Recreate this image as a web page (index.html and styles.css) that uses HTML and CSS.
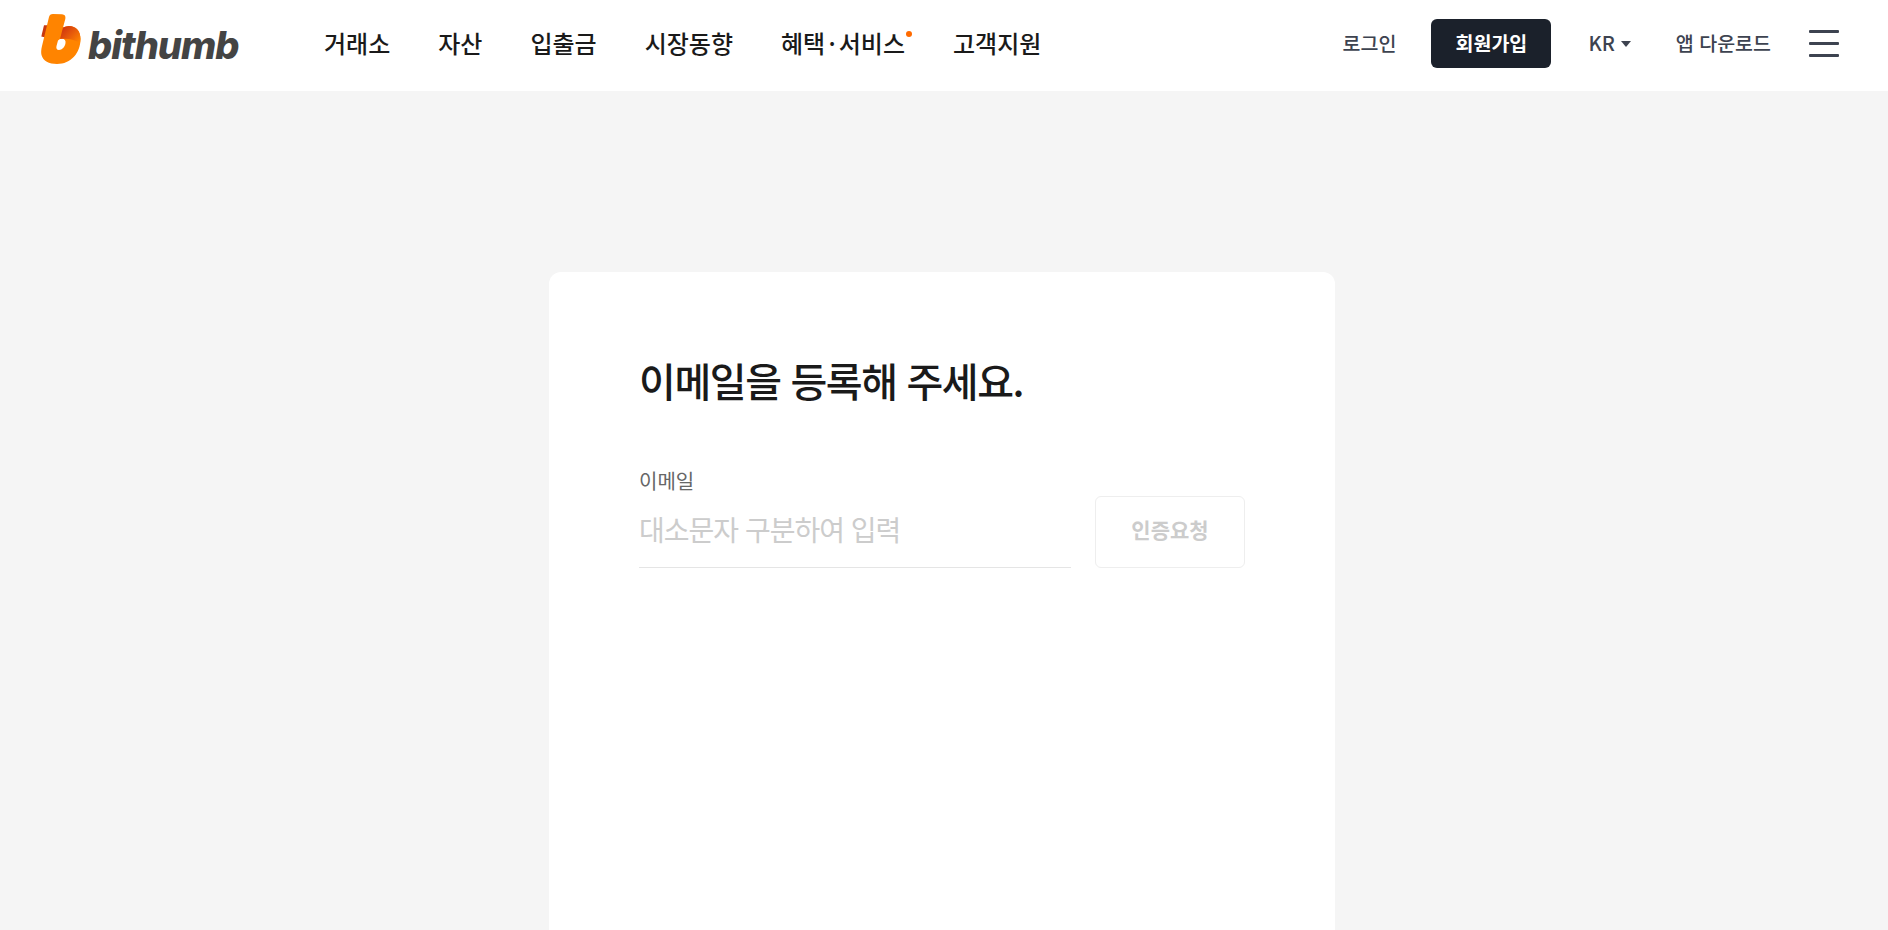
FILE: index.html
```html
<!DOCTYPE html>
<html lang="ko">
<head>
  <meta charset="UTF-8">
  <meta name="viewport" content="width=device-width, initial-scale=1.0">
  <title>빗썸</title>
  <link rel="stylesheet" href="styles.css">
</head>
<body>
<header class="header">
  <a class="logo" href="#">
    <svg class="logo-mark" width="40" height="52" viewBox="0 0 40 52">
      <defs>
        <linearGradient id="bowl" x1="20" y1="14" x2="37" y2="30" gradientUnits="userSpaceOnUse">
          <stop offset="0.1" stop-color="#d0370f"/>
          <stop offset="0.55" stop-color="#e85c0a"/>
          <stop offset="1" stop-color="#ff8400"/>
        </linearGradient>
      </defs>
      <path d="M3 12.300 L9 12.300 L6.500 25 L0.300 23.500 Z" fill="#c8380e"/>
      <path fill-rule="evenodd" fill="#ff8400" d="M12 1 C9.500 1 8.500 2 8 4 L1 33 C0 37 0 40 0.500 42 C2 48 8 51 16 51 C30 51 39.500 40 39.500 26 C39.500 18 35 13 28 13 C26 13 24 13.500 22 14.500 L24.300 6 C25 3 23.500 1.500 21 1.300 Z M19 26 C23 25 25 27 24.500 30 C24 34 21 37 18 37 C15.500 37 15 35 15.500 33 L17 27.500 Z"/>
      <path d="M22 14.500 C24 13.500 26 13 28 13 C35 13 39.500 18 39.500 26 L39 30 C34 27 28 25 19 26 Z" fill="url(#bowl)"/>
    </svg>
    <span class="logo-text">bithumb</span>
  </a>
  <nav class="nav">
    <a href="#">거래소</a>
    <a href="#">자산</a>
    <a href="#">입출금</a>
    <a href="#">시장동향</a>
    <a href="#" class="has-dot">혜택 · 서비스</a>
    <a href="#">고객지원</a>
  </nav>
  <div class="header-right">
    <a href="#" class="login">로그인</a>
    <a href="#" class="join">회원가입</a>
    <a href="#" class="lang">KR<span class="caret"></span></a>
    <a href="#" class="app">앱 다운로드</a>
    <button class="menu" type="button" aria-label="메뉴"><span></span><span></span><span></span></button>
  </div>
</header>

<main class="main">
  <section class="card">
    <h1 class="title">이메일을 등록해 주세요.</h1>
    <form class="email-form">
      <label class="field">
        <span class="field-label">이메일</span>
        <input class="input" type="text" placeholder="대소문자 구분하여 입력">
      </label>
      <button class="verify" type="button" disabled>인증요청</button>
    </form>
  </section>
</main>
</body>
</html>
```

FILE: styles.css
```css
html, body {
  height: 100%;
  overflow: hidden;
}

body {
  margin: 0;
  background-color: #f5f5f5;
  font-family: "Noto Sans CJK KR", "Noto Sans", sans-serif;
  color: #1a1a1a;
}

a {
  color: inherit;
  text-decoration: none;
}

.header {
  display: flex;
  align-items: center;
  box-sizing: border-box;
  height: 91px;
  padding: 0 49px 5px 41px;
  background-color: #fff;
}

.logo {
  display: flex;
  align-items: center;
  width: 282px;
  flex-shrink: 0;
}

.logo-mark {
  display: block;
  margin-bottom: 8px;
}

.logo-text {
  margin: 3px 0 0 7px;
  font-family: Inter, sans-serif;
  font-size: 38px;
  font-weight: 800;
  font-style: italic;
  line-height: 1;
  letter-spacing: -1px;
  color: #444;
}

.nav {
  display: flex;
  align-items: center;
  gap: 48px;
  padding: 0 0 2px 1px;
  font-size: 24px;
  font-weight: 500;
  white-space: nowrap;
}

.has-dot {
  position: relative;
  word-spacing: -3.5px;
}

.has-dot::after {
  content: "";
  position: absolute;
  top: 6px;
  right: -7px;
  width: 6px;
  height: 6px;
  border-radius: 50%;
  background-color: #ff6a00;
}

.header-right {
  display: flex;
  align-items: center;
  margin-left: auto;
  font-size: 19.5px;
  font-weight: 500;
  color: #3d4350;
  white-space: nowrap;
}

.login {
  margin: 0 35px 2px 0;
}

.join {
  display: flex;
  align-items: center;
  justify-content: center;
  box-sizing: border-box;
  width: 120px;
  height: 49px;
  margin-right: 37px;
  padding-bottom: 2px;
  border-radius: 6px;
  background-color: #1b212b;
  color: #fff;
  font-weight: 700;
}

.lang {
  display: flex;
  align-items: center;
  margin: 0 45px 2px 0;
  font-size: 20px;
}

.caret {
  margin: 3px 0 0 6px;
  border-top: 6px solid #3d4350;
  border-left: 5px solid transparent;
  border-right: 5px solid transparent;
}

.app {
  margin: 0 38px 2px 0;
}

.menu {
  display: flex;
  flex-direction: column;
  gap: 9px;
  width: 30px;
  padding: 0;
  border: 0;
  background: none;
}

.menu span {
  display: block;
  height: 3px;
  border-radius: 1px;
  background-color: #3d4350;
}

.main {
  display: flex;
  justify-content: center;
  padding: 181px 4px 0 0;
}

.card {
  box-sizing: border-box;
  width: 786px;
  height: 760px;
  padding: 79px 90px;
  border-radius: 12px;
  background-color: #fff;
}

.title {
  margin: 0;
  font-size: 40px;
  font-weight: 500;
  line-height: 58px;
  letter-spacing: -1.4px;
  color: #1a1a1a;
}

.email-form {
  display: flex;
  align-items: flex-end;
  gap: 24px;
  margin-top: 59px;
}

.field {
  display: flex;
  flex-direction: column;
  flex: 1;
}

.field-label {
  font-size: 20px;
  line-height: 26px;
  color: #666;
}

.input {
  box-sizing: border-box;
  height: 74px;
  padding: 0 0 3px;
  border: 0;
  border-bottom: 1px solid #e5e5e5;
  outline: 0;
  font-family: inherit;
  font-size: 28px;
  letter-spacing: -1px;
}

.input::placeholder {
  color: #ccc;
}

.verify {
  width: 150px;
  height: 72px;
  padding: 0 0 7px;
  border: 1px solid #eee;
  border-radius: 6px;
  background-color: #fff;
  font-family: inherit;
  font-size: 21px;
  font-weight: 700;
  color: #ccc;
}
```
